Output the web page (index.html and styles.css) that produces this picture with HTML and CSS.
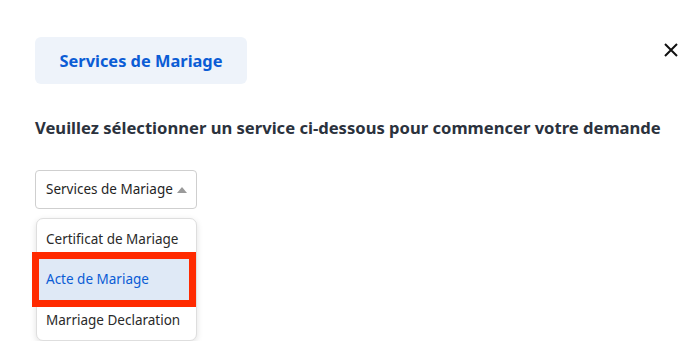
FILE: index.html
```html
<!DOCTYPE HTML>
<html>
<head>
  <link rel="stylesheet" href="styles.css">
</head>
<body>
  <div class="modal">
    <div class="top-row">
      <div class="tab">Services de Mariage</div>
      <button class="close" aria-label="Fermer">
        <svg width="14" height="14" viewBox="0 0 14 14"><path d="M1 1L13 13M13 1L1 13" stroke="#111" stroke-width="2"/></svg>
      </button>
    </div>
    <h3 class="prompt">Veuillez sélectionner un service ci-dessous pour commencer votre demande</h3>
    <div class="select-wrap">
      <div class="select">Services de Mariage <span class="caret"></span></div>
      <div class="menu">
        <div class="option">Certificat de Mariage</div>
        <div class="option active">Acte de Mariage</div>
        <div class="option">Marriage Declaration</div>
      </div>
    </div>
  </div>
</body>
</html>
```

FILE: styles.css
```css
body {
  margin: 0;
  background: #fff;
  font-family: "Noto Sans", "Lato", sans-serif;
}
.modal {
  padding: 37px 22px 0 35px;
}
.top-row {
  display: flex;
  justify-content: space-between;
  align-items: flex-start;
}
.tab {
  width: 212px;
  height: 47px;
  line-height: 47px;
  text-align: center;
  background: #eef3fa;
  border-radius: 6px;
  color: #0b5cd5;
  font-weight: bold;
  font-size: 16.4px;
}
.close {
  border: none;
  background: none;
  padding: 0;
  margin-top: 6px;
  cursor: pointer;
}
.prompt {
  margin: 33px 0 0 0;
  font-size: 16.6px;
  color: #2b323d;
  font-weight: bold;
  line-height: 22px;
}
.select-wrap {
  margin-top: 31px;
  width: 162px;
}
.select {
  height: 37px;
  line-height: 37px;
  border: 1px solid #cfcfcf;
  border-radius: 4px;
  padding-left: 10px;
  font-size: 13.5px;
  color: #1f1f1f;
}
.caret {
  display: inline-block;
  width: 0;
  height: 0;
  border-left: 5px solid transparent;
  border-right: 5px solid transparent;
  border-bottom: 6px solid #9a9a9a;
  margin-left: 1px;
  vertical-align: 1px;
}
.menu {
  margin: 9px 0 0 1px;
  width: 159px;
  background: #fff;
  border: 1px solid #dedede;
  border-radius: 7px;
  box-shadow: 0 2px 6px rgba(0,0,0,0.12);
}
.option {
  height: 40px;
  line-height: 40px;
  padding-left: 9px;
  font-size: 13.5px;
  color: #2a2a2a;
}
.option.active {
  height: 41px;
  line-height: 41px;
  background: #dfe9f6;
  color: #0b5cd5;
  outline: 7px solid #ff2a00;
  margin: 0 7px 0 2px;
  padding-left: 7px;
}
```
